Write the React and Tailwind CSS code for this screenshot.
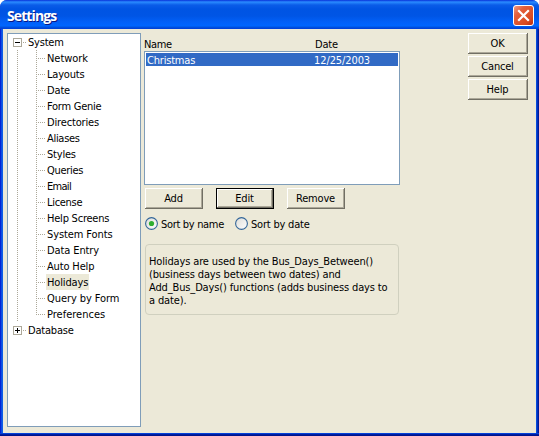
import React from "react";

const items = [
  ["Network", "tracking-[-0.05px]"],
  ["Layouts", "tracking-[-0.2px]"],
  ["Date", "tracking-[-0.15px]"],
  ["Form Genie", "tracking-[-0.25px]"],
  ["Directories", "tracking-[-0.15px]"],
  ["Aliases", "tracking-[-0.3px]"],
  ["Styles", "tracking-[-0.2px]"],
  ["Queries", "tracking-[-0.3px]"],
  ["Email", "tracking-[-0.7px]"],
  ["License", "tracking-[-0.3px]"],
  ["Help Screens", "tracking-[-0.22px]"],
  ["System Fonts", "tracking-[-0.1px]"],
  ["Data Entry", "tracking-[-0.1px]"],
  ["Auto Help", "tracking-[-0.15px]"],
  ["Holidays", "tracking-[-0.15px]"],
  ["Query by Form", "tracking-[-0.08px]"],
  ["Preferences", "tracking-[0px]"],
];

const dotsX = "h-px bg-[repeating-linear-gradient(90deg,#aca899_0_1px,transparent_1px_2px)]";
const dotsY = "w-px bg-[repeating-linear-gradient(180deg,#aca899_0_1px,transparent_1px_2px)]";

function Expander({ plus }) {
  return (
    <svg className="block shrink-0" width="9" height="9" shapeRendering="crispEdges">
      <rect x="0.5" y="0.5" width="8" height="8" fill="#fff" stroke="#aca899" />
      <path d={plus ? "M2 4.5h5M4.5 2v5" : "M2 4.5h5"} stroke="#000" fill="none" />
    </svg>
  );
}

function Root({ label, plus }) {
  return (
    <div className="flex h-4 items-center pl-[5px]">
      <Expander plus={plus} />
      <span className={`ml-px w-[3px] ${dotsX}`} />
      <span className="ml-[2px] h-4 leading-[18px]">{label}</span>
    </div>
  );
}

function Button({ children, wide, focus }) {
  const edge = focus
    ? "border border-black shadow-[inset_-1px_-1px_0_#716f64,inset_1px_1px_0_#fff,inset_-2px_-2px_0_#aca899]"
    : "shadow-[inset_-1px_-1px_0_#716f64,inset_1px_1px_0_#fff,inset_-2px_-2px_0_#aca899]";
  return (
    <button className={`flex h-[21px] items-center justify-center pr-px pb-px leading-none ${wide ? "w-[60px]" : "w-[58px]"} ${edge}`}>
      {children}
    </button>
  );
}

function Radio({ label, checked }) {
  return (
    <label className="flex h-[13px] items-center">
      <svg className="block" width="13" height="13" viewBox="0 0 13 13">
        <defs>
          <linearGradient id="well" x1="0" y1="0" x2="1" y2="1">
            <stop offset="0" stopColor="#dcdcd7" />
            <stop offset="1" stopColor="#ffffff" />
          </linearGradient>
        </defs>
        <circle cx="6.5" cy="6.5" r="5.9" fill="url(#well)" stroke="#336699" strokeWidth="1.1" />
        {checked && <circle cx="6.5" cy="6.5" r="2.6" fill="#2fae30" />}
      </svg>
      <span className={`ml-[3px] h-[13px] leading-[15px] whitespace-nowrap ${checked ? "tracking-[-0.32px]" : ""}`}>{label}</span>
    </label>
  );
}

export default function App() {
  return (
    <div className="h-[436px] w-[539px] overflow-hidden bg-white font-['DejaVu_Sans_Condensed','DejaVu_Sans',sans-serif] text-[11px] tracking-[-0.2px] text-black [font-stretch:condensed]">
      <div className="flex h-full flex-col overflow-hidden rounded-t-[7px] bg-[linear-gradient(90deg,#0019cf_0,#0831d9_1px,#166aee_2px,#0855dd_3px,#0855dd_536px,#0441d8_537px,#001ea0_538px,#00138c_539px)]">
        <header className="flex h-[29px] shrink-0 items-center justify-between bg-[linear-gradient(180deg,#0831d9_0,#2a8bff_2px,#0a5ce8_5px,#0054e3_9px,#0055e5_16px,#0260f8_22px,#0066ff_26px,#0054e0_27px,#003dd7_29px)] pr-[5px] pl-[7px]">
          <h1 className="pt-[3px] font-['Open_Sans','Noto_Sans',sans-serif] text-[14px] leading-none font-bold tracking-[-0.9px] text-white [font-stretch:normal] [text-shadow:1px_1px_0_#0a1883]">Settings</h1>
          <svg className="mt-[2px] block" width="21" height="21" viewBox="0 0 21 21">
            <defs>
              <linearGradient id="close" x1="0" y1="0" x2="1" y2="1">
                <stop offset="0" stopColor="#f0a08a" />
                <stop offset="0.3" stopColor="#e3603c" />
                <stop offset="0.75" stopColor="#da4a20" />
                <stop offset="1" stopColor="#b5290c" />
              </linearGradient>
            </defs>
            <rect x="0.5" y="0.5" width="20" height="20" rx="2.5" fill="url(#close)" stroke="#fff" />
            <path d="M5.2 5.2l10.6 10.6M15.8 5.2l-10.6 10.6" stroke="#fff" strokeWidth="2.2" />
          </svg>
        </header>

        <main className="mx-[3px] flex h-[404px] shrink-0 bg-[#ece9d8] pt-[4px] pl-[4px]">
          <nav className="h-[394px] w-[134px] shrink-0 border border-[#7f9db9] bg-white">
            <Root label="System" />
            <div className="flex h-[272px] pl-[9px]">
              <span className={`h-full ${dotsY}`} />
              <span className={`ml-[18px] h-[265px] ${dotsY}`} />
              <ul>
                {items.map(([name, tracking]) => (
                  <li key={name} className="flex h-4 items-center">
                    <span className={`ml-px w-[7px] ${dotsX}`} />
                    <span className={`ml-px h-4 px-[1px] leading-[18px] whitespace-nowrap ${tracking} ${name === "Holidays" ? "bg-[#ece9d8]" : ""}`}>{name}</span>
                  </li>
                ))}
              </ul>
            </div>
            <Root label="Database" plus />
          </nav>

          <section className="ml-[3px] w-[256px] shrink-0">
            <div className="flex h-[18px] pt-[4px] leading-[15px]">
              <span className="w-[171px] tracking-[-0.4px]">Name</span>
              <span>Date</span>
            </div>
            <div className="h-[134px] border border-[#7f9db9] bg-white p-px">
              <div className="flex h-[13px] bg-[#316ac5] pl-[1px] leading-[15px] text-white">
                <span className="w-[167px]">Christmas</span>
                <span className="tracking-[-0.1px]">12/25/2003</span>
              </div>
            </div>
            <div className="mt-[3px] flex gap-[13px] pl-px">
              <Button>Add</Button>
              <Button focus>Edit</Button>
              <Button>Remove</Button>
            </div>
            <div className="mt-[8px] flex pl-px">
              <div className="w-[90px]"><Radio label="Sort by name" checked /></div>
              <Radio label="Sort by date" />
            </div>
            <div className="mt-[14px] ml-px h-[71px] w-[254px] rounded-[4px] border border-[#d0d0bf] pt-[10px] pl-[3px] leading-[13px] tracking-[-0.14px] whitespace-nowrap">
              <p>Holidays are used by the Bus_Days_Between()</p>
              <p>(business days between two dates) and</p>
              <p>Add_Bus_Days() functions (adds business days to</p>
              <p>a date).</p>
            </div>
          </section>

          <aside className="ml-[68px] flex flex-col gap-[2px]">
            <Button wide>OK</Button>
            <Button wide>Cancel</Button>
            <Button wide>Help</Button>
          </aside>
        </main>
        <footer className="h-[3px] shrink-0 bg-[linear-gradient(180deg,#0441d8_0_1px,#001ea0_1px_2px,#00138c_2px_3px)]" />
      </div>
    </div>
  );
}
